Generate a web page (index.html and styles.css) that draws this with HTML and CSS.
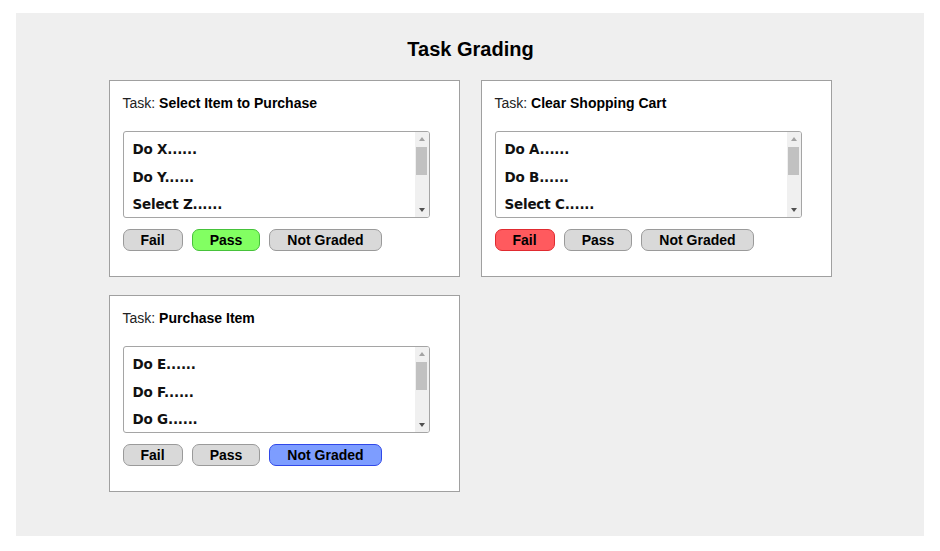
FILE: index.html
```html
<!DOCTYPE html>
<html>
<head>
<meta charset="utf-8">
<link rel="stylesheet" href="styles.css">
</head>
<body>
<main class="panel">
  <h1 class="title">Task Grading</h1>
  <div class="grid">
    <section class="card">
      <div class="task"><span class="label">Task:</span> <b>Select Item to Purchase</b></div>
      <div class="listbox">
        <ul class="items">
          <li>Do X......</li>
          <li>Do Y......</li>
          <li>Select Z......</li>
        </ul>
        <div class="scrollbar">
          <span class="arrow up"></span>
          <span class="thumb"></span>
          <span class="spacer"></span>
          <span class="arrow down"></span>
        </div>
      </div>
      <div class="buttons">
        <button class="btn">Fail</button>
        <button class="btn pass">Pass</button>
        <button class="btn">Not Graded</button>
      </div>
    </section>
    <section class="card">
      <div class="task"><span class="label">Task:</span> <b>Clear Shopping Cart</b></div>
      <div class="listbox">
        <ul class="items">
          <li>Do A......</li>
          <li>Do B......</li>
          <li>Select C......</li>
        </ul>
        <div class="scrollbar">
          <span class="arrow up"></span>
          <span class="thumb"></span>
          <span class="spacer"></span>
          <span class="arrow down"></span>
        </div>
      </div>
      <div class="buttons">
        <button class="btn fail">Fail</button>
        <button class="btn">Pass</button>
        <button class="btn">Not Graded</button>
      </div>
    </section>
    <section class="card">
      <div class="task"><span class="label">Task:</span> <b>Purchase Item</b></div>
      <div class="listbox">
        <ul class="items">
          <li>Do E......</li>
          <li>Do F......</li>
          <li>Do G......</li>
        </ul>
        <div class="scrollbar">
          <span class="arrow up"></span>
          <span class="thumb"></span>
          <span class="spacer"></span>
          <span class="arrow down"></span>
        </div>
      </div>
      <div class="buttons">
        <button class="btn">Fail</button>
        <button class="btn">Pass</button>
        <button class="btn ng">Not Graded</button>
      </div>
    </section>
  </div>
</main>
</body>
</html>
```
FILE: styles.css
```css
html, body {
  margin: 0;
  padding: 0;
  background: #ffffff;
}
body {
  padding: 13px 16px 15px 16px;
  font-family: "Liberation Sans", Arial, sans-serif;
  color: #000;
}
.panel {
  background: #efefef;
  height: 523px;
  box-sizing: border-box;
  padding-top: 25px;
}
.title {
  margin: 0;
  font-size: 20px;
  font-weight: bold;
  line-height: 23px;
  text-align: center;
  padding-left: 1px;
}
.grid {
  margin-top: 19px;
  display: grid;
  grid-template-columns: 351px 351px;
  column-gap: 21px;
  row-gap: 18px;
  justify-content: center;
}
.card {
  background: #fff;
  border: 1px solid #a0a0a0;
  height: 197px;
  box-sizing: border-box;
  padding: 14px 13px 0 13px;
}
.task {
  font-size: 14px;
  line-height: 17px;
  white-space: nowrap;
}
.task .label {
  color: #222;
}
.listbox {
  margin-top: 19px;
  width: 307px;
  height: 87px;
  box-sizing: border-box;
  border: 1px solid #a5a5a5;
  border-radius: 3px;
  display: flex;
  overflow: hidden;
  background: #fff;
}
.items {
  list-style: none;
  margin: 0;
  padding: 4px 0 0 9px;
  flex: 1;
  font-family: "DejaVu Sans", Verdana, sans-serif;
  font-weight: bold;
  font-size: 13.5px;
  line-height: 27.5px;
  color: #111;
  letter-spacing: -0.2px;
  white-space: nowrap;
  overflow: hidden;
}
.scrollbar {
  width: 14px;
  background: #f0f0f0;
  display: flex;
  flex-direction: column;
  align-items: center;
}
.arrow {
  height: 14px;
  width: 14px;
  display: flex;
  align-items: center;
  justify-content: center;
}
.arrow::before {
  content: "";
  width: 0;
  height: 0;
  border-left: 3.5px solid transparent;
  border-right: 3.5px solid transparent;
}
.arrow.up::before {
  border-bottom: 4px solid #a3a3a3;
}
.arrow.down::before {
  border-top: 4px solid #505050;
}
.thumb {
  margin-top: 1px;
  width: 11px;
  height: 28px;
  background: #c1c1c1;
}
.spacer {
  flex: 1;
}
.buttons {
  margin-top: 11px;
  display: flex;
  gap: 9px;
}
.btn {
  height: 22px;
  padding: 0 17px;
  border: 1px solid #9a9a9a;
  border-radius: 7px;
  background: #d9d9d9;
  font-family: "Liberation Sans", Arial, sans-serif;
  font-weight: bold;
  font-size: 14px;
  color: #000;
  line-height: 20px;
  cursor: pointer;
}
.btn.pass {
  background: #82ff62;
  border-color: #46c23a;
}
.btn.fail {
  background: #ff5a5e;
  border-color: #e02a30;
}
.btn.ng {
  background: #7d9dff;
  border-color: #3048e8;
}
```
